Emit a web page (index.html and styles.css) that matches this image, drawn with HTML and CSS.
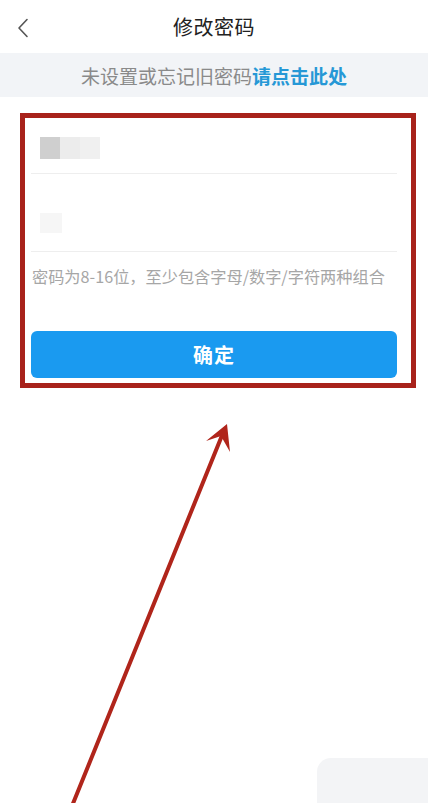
FILE: index.html
```html
<!DOCTYPE html>
<html lang="zh-CN">
<head>
<meta charset="utf-8">
<title>修改密码</title>
<link rel="stylesheet" href="styles.css">
</head>
<body>
<div class="page">
  <header class="topbar">
    <div class="back">
      <svg width="12" height="20" viewBox="0 0 12 20"><path d="M10 1.5 L2 10 L10 18.5" fill="none" stroke="#555" stroke-width="1.6" stroke-linecap="round" stroke-linejoin="round"/></svg>
    </div>
    <h1 class="title">修改密码</h1>
    <div></div>
  </header>
  <div class="notice">未设置或忘记旧密码<span class="link">请点击此处</span></div>
  <section class="form">
    <div class="row row-first"><span class="ph ph-a"></span></div>
    <div class="row row-second"><span class="ph ph-b"></span></div>
    <p class="hint">密码为8-16位，至少包含字母/数字/字符两种组合</p>
    <button class="submit">确定</button>
  </section>
  <div class="blob"></div>
  <svg class="arrow" width="428" height="803" viewBox="0 0 428 803">
    <line x1="72" y1="806" x2="223" y2="433" stroke="#b0251b" stroke-width="4" stroke-linecap="round"/>
    <polygon points="227,424 206,441 221,436 230,452" fill="#b0251b"/>
  </svg>
</div>
</body>
</html>
```
FILE: styles.css
```css
* { box-sizing: border-box; }
html, body { margin: 0; padding: 0; background: #fff; }
body { font-family: "Noto Sans CJK SC", "Noto Sans", sans-serif; }
.page { position: relative; width: 428px; height: 803px; overflow: hidden; }
.topbar {
  height: 53px;
  display: grid;
  grid-template-columns: 1fr auto 1fr;
  align-items: center;
}
.back { padding-left: 17px; display: flex; align-items: center; padding-top: 2px; }
.title { margin: 0; font-size: 20px; font-weight: 400; color: #222; letter-spacing: 0.5px; }
.notice {
  height: 44px;
  background: #f2f4f7;
  display: flex;
  align-items: center;
  justify-content: center;
  font-size: 19px;
  color: #8a8a8a;
}
.link { color: #2698d6; font-weight: 700; }
.form {
  margin: 16px 0 0 20px;
  width: 396px;
  border: 5px solid #a8221b;
  padding: 0 14px 5px 6px;
}
.row { border-bottom: 1px solid #eeeeee; display: flex; padding-left: 9px; }
.row-first { height: 56px; align-items: center; padding-top: 4px; }
.row-second { height: 78px; align-items: flex-end; padding-bottom: 18px; }
.ph { display: block; height: 22px; }
.ph-a { width: 60px; background: linear-gradient(90deg, #cfcfcf 0 20px, #ececec 20px 40px, #f0f0f0 40px); }
.ph-b { width: 22px; height: 20px; background: #f6f6f6; }
.hint {
  margin: 0;
  height: 48px;
  line-height: 48px;
  font-size: 16.2px;
  color: #a6a6a6;
  white-space: nowrap;
  padding-left: 1px;
}
.submit {
  display: block;
  width: 100%;
  margin-top: 31px;
  height: 47px;
  border: 0;
  border-radius: 6px;
  background: #1a9af0;
  color: #fff;
  font-family: inherit;
  font-size: 20px;
  font-weight: 700;
  letter-spacing: 1px;
}
.blob {
  position: absolute;
  left: 317px;
  top: 758px;
  width: 130px;
  height: 60px;
  border-radius: 14px;
  background: #f3f4f6;
}
.arrow { position: absolute; left: 0; top: 0; pointer-events: none; }
```
